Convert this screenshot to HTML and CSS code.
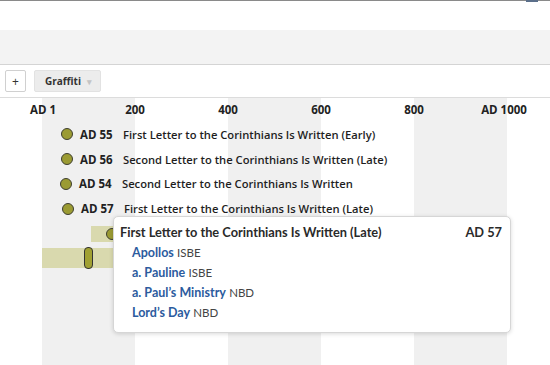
FILE: index.html
```html
<!DOCTYPE html>
<html lang="en">
<head>
    <meta charset="UTF-8">
    <meta name="viewport" content="width=device-width, initial-scale=1.0">
    <title>Timeline</title>
    <link rel="stylesheet" href="styles.css">
</head>
<body>
    <div class="topbar"><span class="corner"></span></div>
    <div class="subbar"></div>
    <div class="toolbar">
        <button class="btn-add">+</button>
        <button class="btn-menu">Graffiti <span class="caret">&#9662;</span></button>
    </div>

    <div class="timeline">
        <div class="axis">
            <span class="tick" style="left:43px">AD 1</span>
            <span class="tick" style="left:135px">200</span>
            <span class="tick" style="left:228px">400</span>
            <span class="tick" style="left:321px">600</span>
            <span class="tick" style="left:414px">800</span>
            <span class="tick" style="left:504px">AD 1000</span>
        </div>

        <div class="row" style="padding-left:61px">
            <span class="dot"></span><span class="date">AD 55</span>
            <span class="title">First Letter to the Corinthians Is Written (Early)</span>
        </div>
        <div class="row" style="padding-left:61px">
            <span class="dot"></span><span class="date">AD 56</span>
            <span class="title">Second Letter to the Corinthians Is Written (Late)</span>
        </div>
        <div class="row" style="padding-left:60px">
            <span class="dot"></span><span class="date">AD 54</span>
            <span class="title">Second Letter to the Corinthians Is Written</span>
        </div>
        <div class="row" style="padding-left:62px">
            <span class="dot"></span><span class="date">AD 57</span>
            <span class="title">First Letter to the Corinthians Is Written (Late)</span>
        </div>
        <div class="row">
            <span class="range short" style="margin-left:91px;width:40px"><span class="dot"></span></span>
        </div>
        <div class="row">
            <span class="range tall" style="margin-left:42px;width:90px"><span class="marker"></span></span>
        </div>

        <!-- hover card for AD 57 -->
        <div class="tooltip">
            <div class="tip-head">
                <span>First Letter to the Corinthians Is Written (Late)</span>
                <span>AD 57</span>
            </div>
            <ul class="tip-links">
                <li><a href="#">Apollos</a> <span class="src">ISBE</span></li>
                <li><a href="#">a. Pauline</a> <span class="src">ISBE</span></li>
                <li><a href="#">a. Paul’s Ministry</a> <span class="src">NBD</span></li>
                <li><a href="#">Lord’s Day</a> <span class="src">NBD</span></li>
            </ul>
        </div>
    </div>
</body>
</html>
```

FILE: styles.css
```css
* {
    margin: 0;
    padding: 0;
    box-sizing: border-box;
}

body {
    font-family: "Open Sans", Arial, sans-serif;
    background: white;
    color: #222;
    width: 550px;
    height: 365px;
    overflow: hidden;
}

.topbar {
    height: 30px;
    border-top: 1px solid #8a8a8a;
    position: relative;
}

.corner {
    position: absolute;
    top: -1px;
    right: 12px;
    width: 12px;
    height: 2px;
    background: #5b6f8a;
}

.subbar {
    height: 35px;
    background: #f3f3f3;
    border-bottom: 1px solid #d4d4d4;
}

.toolbar {
    display: flex;
    align-items: center;
    gap: 8px;
    height: 33px;
    padding: 0 5px;
    border-bottom: 1px solid #dcdcdc;
}

.toolbar button {
    height: 22px;
    font-family: "Open Sans", Arial, sans-serif;
    color: #333;
    border-radius: 2px;
    cursor: pointer;
}

.btn-add {
    width: 21px;
    background: white;
    border: 1px solid #d0d0d0;
    font-size: 12px;
}

.btn-menu {
    width: 67px;
    background: #ececec;
    border: 1px solid #e2e2e2;
    font-size: 10px;
    font-weight: 700;
    text-align: left;
    padding-left: 10px;
}

.caret {
    color: #c4c4c4;
    font-size: 9px;
    margin-left: 3px;
}

.timeline {
    position: relative;
    height: 267px;
    background: repeating-linear-gradient(90deg, #f0f0f0 0 93px, white 93px 186px);
    background-position: 42px 0;
}

.axis {
    position: relative;
    height: 24px;
}

.tick {
    position: absolute;
    top: 4px;
    transform: translateX(-50%);
    font-size: 11.5px;
    font-weight: 700;
    color: #222;
}

.row {
    display: flex;
    align-items: center;
    height: 24.8px;
    font-size: 11.5px;
    white-space: nowrap;
}

.dot {
    width: 12px;
    height: 12px;
    border-radius: 50%;
    background: #9b9b33;
    border: 1.5px solid #3e3e30;
    margin-right: 7px;
    flex-shrink: 0;
}

.date {
    font-weight: 700;
    width: 36px;
    margin-right: 7px;
}

.title {
    font-size: 11.2px;
    font-weight: 600;
    color: #1e1e1e;
}

.range {
    display: flex;
    align-items: center;
    background: #d9d9ae;
}

.range.short {
    height: 16px;
    padding-left: 15px;
}

.range.tall {
    height: 20px;
    padding-left: 42px;
}

.marker {
    width: 9px;
    height: 22px;
    border-radius: 4px;
    background: #a0a032;
    border: 1.5px solid #333;
}

.tooltip {
    position: absolute;
    left: 113px;
    top: 118px;
    width: 398px;
    height: 117px;
    background: white;
    border: 1px solid #d6d6d6;
    border-radius: 5px;
    box-shadow: 0 1px 4px rgba(0, 0, 0, 0.15);
    padding: 7px 8px 0 6px;
    font-family: Lato, "Open Sans", sans-serif;
}

.tip-head {
    display: flex;
    justify-content: space-between;
    font-size: 12.8px;
    font-weight: 700;
    color: #2a2a2a;
    height: 19px;
}

.tip-links {
    list-style: none;
    padding-left: 12px;
}

.tip-links li {
    height: 20px;
    line-height: 20px;
    font-size: 12.5px;
}

.tip-links a {
    color: #2c5b9e;
    text-decoration: none;
    font-weight: 700;
}

.src {
    color: #444;
    font-size: 11.5px;
}
```
